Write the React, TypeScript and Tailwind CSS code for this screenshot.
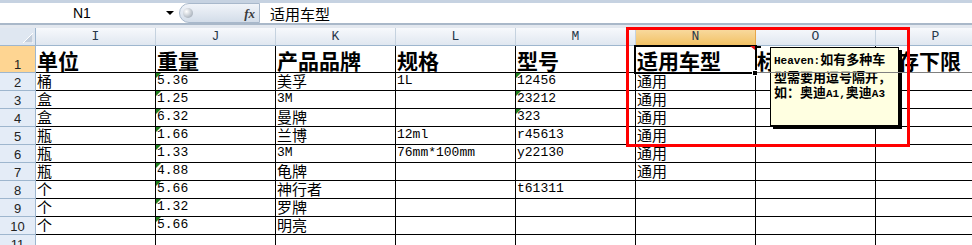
import React from "react";

const COLS = ["I", "J", "K", "L", "M", "N", "O", "P"];

const DATA: string[][] = [
  ["单位", "重量", "产品品牌", "规格", "型号", "适用车型", "标准", "库存下限"],
  ["桶", "5.36", "美孚", "1L", "12456", "通用", "", ""],
  ["盒", "1.25", "3M", "", "23212", "通用", "", ""],
  ["盒", "6.32", "曼牌", "", "323", "通用", "", ""],
  ["瓶", "1.66", "兰博", "12ml", "r45613", "通用", "", ""],
  ["瓶", "1.33", "3M", "76mm*100mm", "y22130", "通用", "", ""],
  ["瓶", "4.88", "龟牌", "", "", "通用", "", ""],
  ["个", "5.66", "神行者", "", "t61311", "", "", ""],
  ["个", "1.32", "罗牌", "", "", "", "", ""],
  ["个", "5.66", "明亮", "", "", "", "", ""],
  ["", "", "", "", "", "", "", ""],
];

const GREEN = new Set([
  "J2", "J3", "J4", "J5", "J6", "J7", "J8", "J9", "J10",
  "M2", "M3", "M4",
]);

function splitRuns(s: string): { t: string; cjk: boolean }[] {
  const out: { t: string; cjk: boolean }[] = [];
  for (const ch of s) {
    const cjk = ch.charCodeAt(0) > 0x2000;
    const last = out[out.length - 1];
    if (last && last.cjk === cjk) last.t += ch;
    else out.push({ t: ch, cjk });
  }
  return out;
}

function BodyText({ s }: { s: string }) {
  return (
    <span className="leading-[16px]">
      {splitRuns(s).map((r, i) =>
        r.cjk ? (
          <span key={i} className="font-['Noto_Sans_CJK_SC',sans-serif] text-[15px]">
            {r.t}
          </span>
        ) : (
          <span key={i} className="font-['Liberation_Mono',monospace] text-[13px]">
            {r.t}
          </span>
        )
      )}
    </span>
  );
}

function NoteText({ s }: { s: string }) {
  return (
    <>
      {splitRuns(s).map((r, i) =>
        r.cjk ? (
          <span key={i} className="font-['Noto_Sans_CJK_SC',sans-serif] text-[13px] font-bold">
            {r.t}
          </span>
        ) : (
          <span key={i} className="font-['Liberation_Mono',monospace] text-[11px] font-bold">
            {r.t}
          </span>
        )
      )}
    </>
  );
}

export default function App() {
  return (
    <div className="relative w-[972px] h-[245px] overflow-hidden bg-white text-black">
      {/* Formula bar */}
      <div className="h-[3px] bg-[#c6d2e1]" />
      <div className="h-[20px] flex bg-white">
        <div className="w-[179px] flex items-center">
          <span className="pl-[73px] font-['Liberation_Sans',sans-serif] text-[14px] leading-none">
            N1
          </span>
          <svg className="ml-auto mr-[5px]" width="8" height="4" viewBox="0 0 8 4">
            <polygon points="0,0 8,0 4,4" fill="#000" />
          </svg>
        </div>
        <div className="w-[81px] h-[20px] flex items-center rounded-l-[10px] border border-[#a8b8cb] bg-linear-to-b from-[#f1f4f9] to-[#d3dde9]">
          <div className="ml-[3px] w-[10px] h-[10px] rounded-full bg-[radial-gradient(circle_at_35%_35%,#ffffff,#8e9aa8)]" />
          <span className="ml-auto mr-[4px] font-['Liberation_Serif',serif] italic font-bold text-[13px] text-[#3a3a3a] leading-none">
            fx
          </span>
        </div>
        <div className="flex-1 flex items-center pl-[10px]">
          <span className="font-['Noto_Sans_CJK_SC',sans-serif] text-[15px] leading-none">适用车型</span>
        </div>
      </div>
      <div className="h-[2px] bg-[#a9b8c9]" />
      <div className="h-[3px] bg-[#e3e8ef]" />

      {/* Sheet grid */}
      <div className="grid grid-cols-[36px_repeat(8,120px)]">
        {/* corner */}
        <div className="h-[18px] border-r border-b border-[#9eb6ce] bg-[#dfe7f1] flex items-end justify-end pr-[2px] pb-[2px]">
          <svg width="10" height="10" viewBox="0 0 10 10">
            <polygon points="10,0 10,10 0,10" fill="#c3cedc" stroke="#ffffff" strokeWidth="1" />
          </svg>
        </div>
        {COLS.map((c) => (
          <div
            key={c}
            className={
              c === "N"
                ? "h-[18px] border-r border-b border-r-[#e6a64a] border-b-[#9eb6ce] bg-linear-to-b from-[#f9dca3] to-[#f1c163] flex items-center justify-center font-['Liberation_Mono',monospace] text-[13px] text-[#27384a]"
                : "h-[18px] border-r border-b border-r-[#c5d2df] border-b-[#9eb6ce] bg-linear-to-b from-[#f7f9fc] to-[#e0e7f0] flex items-center justify-center font-['Liberation_Mono',monospace] text-[13px] text-[#27384a]"
            }
          >
            {c}
          </div>
        ))}

        {DATA.map((row, ri) => {
          const rn = ri + 1;
          const isHead = ri === 0;
          return (
            <React.Fragment key={rn}>
              <div
                className={
                  isHead
                    ? "h-[27px] border-r border-b border-[#9eb6ce] bg-[#fed592] flex items-end justify-center font-['Liberation_Sans',sans-serif] text-[13px] leading-[15px] text-[#222]"
                    : "h-[18px] border-r border-b border-[#9eb6ce] bg-[#e4ecf7] flex items-end justify-center font-['Liberation_Sans',sans-serif] text-[13px] leading-[15px] text-[#222]"
                }
              >
                {rn}
              </div>
              {row.map((v, ci) => {
                const key = COLS[ci] + rn;
                const grayBottom = isHead && ci >= 6;
                return (
                  <div
                    key={key}
                    className={
                      (isHead
                        ? "h-[27px] relative border-r border-b border-black flex items-end pl-[1px] whitespace-nowrap"
                        : "h-[18px] relative border-r border-b border-black flex items-end pl-[1px] pb-[1px] whitespace-nowrap") +
                      (grayBottom ? " border-b-[#808080]" : "")
                    }
                  >
                    {GREEN.has(key) && (
                      <svg className="absolute left-0 top-0" width="5" height="5" viewBox="0 0 5 5">
                        <polygon points="0,0 5,0 0,5" fill="#1d7d1d" />
                      </svg>
                    )}
                    {isHead ? (
                      <span className="font-['Noto_Sans_CJK_SC',sans-serif] text-[21px] font-bold leading-[22px] pb-[1px]">
                        {v}
                      </span>
                    ) : (
                      <BodyText s={v} />
                    )}
                  </div>
                );
              })}
            </React.Fragment>
          );
        })}
      </div>

      {/* Selection of N1 */}
      <div className="absolute left-[634px] top-[45px] w-[123px] h-[29px] border-2 border-black" />
      <div className="absolute left-[752px] top-[70px] w-[6px] h-[6px] bg-black border border-white" />

      {/* comment indicator + connector */}
      <svg className="absolute left-[750px] top-[46px]" width="20" height="4" viewBox="0 0 20 4">
        <polygon points="0,0 5,0 5,4" fill="#e01010" />
        <polygon points="5,0 11,0 11,2 5,2" fill="#000" />
      </svg>

      {/* Comment box */}
      <div className="absolute left-[770px] top-[47px] w-[129px] h-[79px] border border-black bg-[#ffffe1] shadow-[3px_3px_0_#000] pl-[3px] pt-[3px] leading-[15px] whitespace-nowrap">
        <div>
          <NoteText s="Heaven:如有多种车" />
        </div>
        <div>
          <NoteText s="型需要用逗号隔开，" />
        </div>
        <div>
          <NoteText s="如：奥迪A1,奥迪A3" />
        </div>
      </div>

      {/* gray line crossing */}
      <div className="absolute left-[757px] right-0 top-[72px] h-px bg-[#808080]" />

      {/* Red annotation rectangle */}
      <div className="absolute left-[626px] top-[27px] w-[284px] h-[120px] border-[3px] border-[#ff0000]" />
    </div>
  );
}
